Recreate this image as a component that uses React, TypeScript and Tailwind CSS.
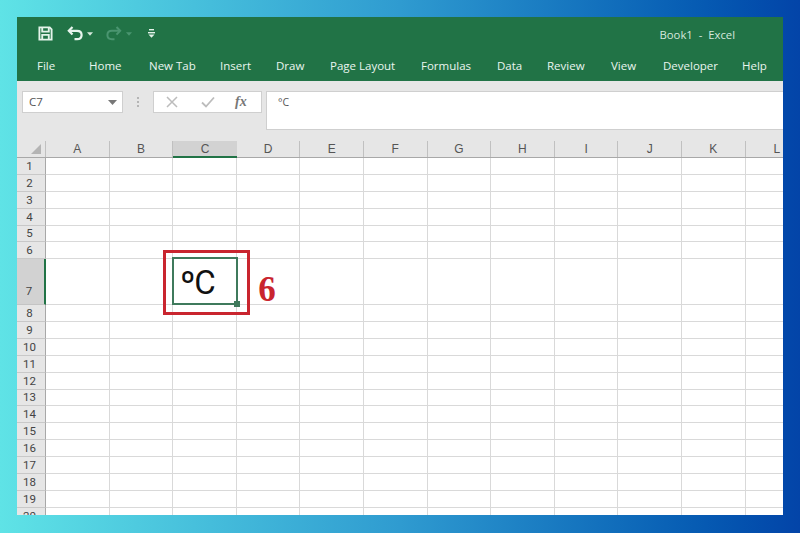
import React from 'react';

const tabs = [
    {name: 'File', cls: 'w-[52px]'},
    {name: 'Home', cls: 'w-[60px]'},
    {name: 'New Tab', cls: 'w-[71px]'},
    {name: 'Insert', cls: 'w-[56px]'},
    {name: 'Draw', cls: 'w-[54px]'},
    {name: 'Page Layout', cls: 'w-[91px]'},
    {name: 'Formulas', cls: 'w-[76px]'},
    {name: 'Data', cls: 'w-[50px]'},
    {name: 'Review', cls: 'w-[64px]'},
    {name: 'View', cls: 'w-[52px]'},
    {name: 'Developer', cls: 'w-[79px]'},
    {name: 'Help', cls: 'w-[40px]'},
]

const columns = ['A', 'B', 'C', 'D', 'E', 'F', 'G', 'H', 'I', 'J', 'K', 'L']
const rows = Array.from({length: 20}, (_, i) => i + 1)

const QuickAccess = () => (
    <div className="flex items-center h-[33px] pl-[21px]">
        <svg width="15" height="15" viewBox="0 0 16 16" fill="none" stroke="#e4f3ea" strokeWidth="2">
            <path d="M1.5 1.5H12.5L14.5 3.5V14.5H1.5Z"/>
            <path d="M4.5 1.5V6H11.5V1.5"/>
            <path d="M4.5 14.5V9.5H11.5V14.5"/>
        </svg>
        <svg className="ml-[14px]" width="17" height="15" viewBox="0 0 17 15" fill="none" stroke="#e8f5ee" strokeWidth="2.2">
            <path d="M5.5 1L1.8 4.8L5.5 8.6"/>
            <path d="M2 4.8H10C12.8 4.8 14.6 6.6 14.6 9C14.6 11.4 12.8 13.2 10 13.2H7.5"/>
        </svg>
        <svg className="ml-[3px]" width="6" height="4" viewBox="0 0 7 4" fill="#d5e8dc">
            <path d="M0 0H7L3.5 4Z"/>
        </svg>
        <svg className="ml-[12px]" width="17" height="15" viewBox="0 0 17 15" fill="none" stroke="#4a9570" strokeWidth="2">
            <path d="M11.5 1L15.2 4.8L11.5 8.6"/>
            <path d="M15 4.8H7C4.2 4.8 2.4 6.6 2.4 9C2.4 11.4 4.2 13.2 7 13.2H9.5"/>
        </svg>
        <svg className="ml-[4px]" width="6" height="4" viewBox="0 0 7 4" fill="#4a9570">
            <path d="M0 0H7L3.5 4Z"/>
        </svg>
        <svg className="ml-[16px]" width="7" height="9" viewBox="0 0 7 9" fill="#e4f3ea">
            <rect x="1" y="0" width="5" height="1.4"/>
            <rect x="0" y="3" width="7" height="1.4"/>
            <path d="M0.5 5.6H6.5L3.5 8.8Z"/>
        </svg>
    </div>
)

const FormulaBar = () => (
    <div className="flex h-[60px] shrink-0 bg-[#e6e6e6] pt-[10px] pl-[5px]">
        <div className="flex items-center justify-between w-[101px] h-[22px] bg-white border border-[#cfcfcf] pl-[6px] pr-[5px] text-[11.5px] text-[#555]">
            <span>C7</span>
            <svg width="9" height="5" viewBox="0 0 9 5" fill="#777">
                <path d="M0 0H9L4.5 5Z"/>
            </svg>
        </div>
        <div className="flex flex-col justify-center gap-[2px] w-[30px] h-[22px] items-center">
            <span className="w-[2px] h-[2px] bg-[#b5b5b5]"/>
            <span className="w-[2px] h-[2px] bg-[#b5b5b5]"/>
            <span className="w-[2px] h-[2px] bg-[#b5b5b5]"/>
        </div>
        <div className="flex items-center w-[109px] h-[22px] bg-white border border-[#cfcfcf] pl-[12px]">
            <svg width="12" height="12" viewBox="0 0 12 12" fill="none" stroke="#bcbcbc" strokeWidth="1.5">
                <path d="M1 1L11 11M11 1L1 11"/>
            </svg>
            <svg className="ml-[23px]" width="14" height="12" viewBox="0 0 14 12" fill="none" stroke="#bcbcbc" strokeWidth="1.8">
                <path d="M1 6.5L5 10.5L13 1.5"/>
            </svg>
            <span className="ml-[20px] text-[14px] leading-none font-bold italic text-[#777] font-['Liberation_Serif',serif]">fx</span>
        </div>
        <div className="flex-1 h-[39px] ml-[4px] bg-white border-l border-t border-b border-[#cfcfcf] pl-[11px] pt-[3px] text-[10.5px] text-[#555]">
            °C
        </div>
    </div>
)

const HeaderRow = () => (
    <div className="grid grid-cols-[29px_repeat(12,63.6px)] h-[17px] shrink-0 bg-[#e6e6e6] border-b border-[#a8a8a8]">
        <div className="relative border-r border-[#c0c0c0]">
            <svg className="absolute right-[4px] bottom-[3px]" width="10" height="10" viewBox="0 0 10 10" fill="#b4b4b4">
                <path d="M10 0V10H0Z"/>
            </svg>
        </div>
        {columns.map(col => (
            <div
                key={col}
                className={col === 'C'
                    ? 'flex items-center justify-center bg-[#d2d2d2] border-b-2 -mb-px border-[#217346] text-[12px] leading-none text-[#555] font-["Liberation_Sans",sans-serif]'
                    : 'flex items-center justify-center border-r border-[#c0c0c0] text-[12px] leading-none text-[#555] font-["Liberation_Sans",sans-serif]'}
            >
                {col}
            </div>
        ))}
    </div>
)

const Row = ({n}: { n: number }) => {
    const tall = n === 7
    const short = n === 5 || n === 13
    return (
        <div className={tall
            ? 'grid grid-cols-[29px_repeat(12,63.6px)] h-[46px] shrink-0'
            : short
                ? 'grid grid-cols-[29px_repeat(12,63.6px)] h-[16px] shrink-0'
                : 'grid grid-cols-[29px_repeat(12,63.6px)] h-[17px] shrink-0'}>
            <div className={tall
                ? 'flex items-end justify-center pr-[3px] bg-[#d2d2d2] border-r-2 border-[#217346] border-b border-b-[#c4c4c4] pb-[7px] text-[11.5px] leading-[11px] text-[#444] font-["Roboto",sans-serif]'
                : 'flex items-center justify-center pr-[3px] pt-[1px] bg-[#e6e6e6] border-r border-[#a8a8a8] border-b border-b-[#c8c8c8] text-[11.5px] leading-none text-[#444] font-["Roboto",sans-serif]'}>
                {n}
            </div>
            {columns.map(col => (
                <div key={col} className="relative border-r border-b border-[#d9d9d9] bg-white">
                    {tall && col === 'C' && (
                        <>
                            <div className="absolute z-10 -left-px -top-[2px] right-[-2px] bottom-[-1px] border-2 border-[#3f7a5c] flex items-center pl-[6px] pt-[3px]">
                                <span className="text-[33px] leading-none tracking-[-1px] text-[#111] font-['Roboto',sans-serif]">ºC</span>
                            </div>
                            <div className="absolute z-10 right-[-4px] bottom-[-3px] w-[6px] h-[6px] bg-[#3f7a5c]"/>
                            <div className="absolute left-[-10px] top-[-9px] w-[87px] h-[65px] border-[3px] border-[#c9252f] z-10"/>
                            <span className="absolute left-[85px] top-[13px] z-10 text-[35px] leading-none font-bold text-[#c9252f] font-['Liberation_Serif',serif]">6</span>
                        </>
                    )}
                </div>
            ))}
        </div>
    )
}

export default function App() {
    return (
        <div className="flex w-[800px] h-[533px] pt-[17px] pl-[17px] bg-gradient-to-r from-[#5fe3e6] via-[#2f9bd0] to-[#0344a8] font-['Open_Sans',sans-serif]">
            <div className="flex flex-col w-[766px] h-[498px] overflow-hidden bg-white">
                <div className="h-[64px] shrink-0 bg-[#217346] relative">
                    <QuickAccess/>
                    <span className="absolute right-[48px] top-[10px] text-[11.3px] text-[#d4e8dc]">Book1&nbsp; -&nbsp; Excel</span>
                    <div className="flex pl-[20px] pt-[7px] text-[11.5px] leading-[17px] text-[#eaf5ef]">
                        {tabs.map(tab => (
                            <span key={tab.name} className={tab.cls + ' shrink-0 whitespace-nowrap'}>{tab.name}</span>
                        ))}
                    </div>
                </div>
                <FormulaBar/>
                <HeaderRow/>
                {rows.map(n => <Row key={n} n={n}/>)}
            </div>
        </div>
    )
}
